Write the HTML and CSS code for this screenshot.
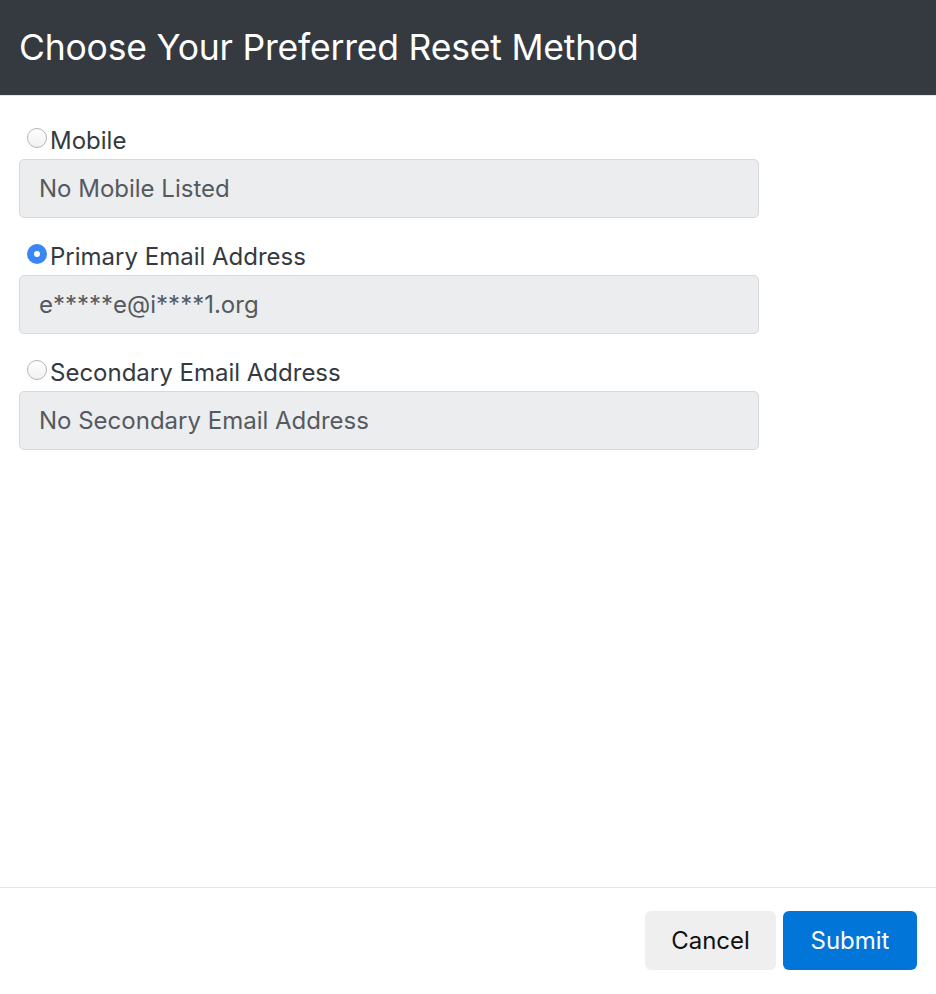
FILE: index.html
```html
<!DOCTYPE html>
<html>
<head>
<meta charset="utf-8">
<link rel="stylesheet" href="styles.css">
</head>
<body>
<div class="modal">
  <div class="modal-header">
    <h1 class="title">Choose Your Preferred Reset Method</h1>
  </div>
  <div class="modal-body">
    <div class="option">
      <label class="option-label"><span class="radio"></span>Mobile</label>
      <div class="field">No Mobile Listed</div>
    </div>
    <div class="option">
      <label class="option-label"><span class="radio checked"></span>Primary Email Address</label>
      <div class="field">e*****e@i****1.org</div>
    </div>
    <div class="option">
      <label class="option-label"><span class="radio"></span>Secondary Email Address</label>
      <div class="field">No Secondary Email Address</div>
    </div>
  </div>
  <div class="modal-footer">
    <button class="btn btn-cancel">Cancel</button>
    <button class="btn btn-submit">Submit</button>
  </div>
</div>
</body>
</html>
```
FILE: styles.css
```css
html, body {
  margin: 0;
  padding: 0;
  background: #ffffff;
}
body {
  font-family: Inter, "Liberation Sans", Arial, sans-serif;
  color: #343a40;
}
.modal {
  width: 936px;
  height: 994px;
  display: flex;
  flex-direction: column;
}
.modal-header {
  background: #343a40;
  height: 96px;
  box-sizing: border-box;
  padding: 0 19px;
  display: flex;
  align-items: center;
  border-bottom: 1px solid #e6e8ea;
}
.title {
  margin: 0;
  color: #ffffff;
  font-weight: 400;
  font-size: 35.5px;
  letter-spacing: -0.2px;
  line-height: 1;
}
.modal-body {
  flex: 1;
  padding: 34px 19px 0;
  display: flex;
  flex-direction: column;
  gap: 28px;
}
.option {
  display: flex;
  flex-direction: column;
}
.option-label {
  display: flex;
  align-items: center;
  font-size: 24px;
  line-height: 28px;
  height: 29px;
  padding-left: 8px;
  color: #343a40;
  margin-top: -4px;
  margin-bottom: 4px;
}
.radio {
  width: 20px;
  height: 20px;
  border-radius: 50%;
  border: 1px solid #b4b4b4;
  background: linear-gradient(#ffffff, #f1f1f1);
  box-sizing: border-box;
  margin-right: 3px;
  margin-top: -6px;
  flex: none;
}
.radio.checked {
  border: none;
  background: #3b86f6;
  position: relative;
}
.radio.checked::after {
  content: "";
  position: absolute;
  left: 7px;
  top: 7px;
  width: 6px;
  height: 6px;
  border-radius: 50%;
  background: #ffffff;
}
.field {
  width: 740px;
  height: 59px;
  box-sizing: border-box;
  border: 1px solid #d6d8db;
  border-radius: 5px;
  background: #ecedef;
  padding: 0 19px;
  display: flex;
  align-items: center;
  font-size: 24px;
  color: #555a5f;
}
.modal-footer {
  height: 107px;
  box-sizing: border-box;
  border-top: 1px solid #e3e5e8;
  display: flex;
  justify-content: flex-end;
  align-items: flex-start;
  padding: 23px 19px 0;
  gap: 7px;
}
.btn {
  height: 59px;
  border: none;
  border-radius: 6px;
  font-family: Inter, "Liberation Sans", Arial, sans-serif;
  font-size: 24px;
  padding: 0;
}
.btn-cancel {
  width: 131px;
  background: #efefef;
  color: #111111;
}
.btn-submit {
  width: 134px;
  background: #0275d8;
  color: #ffffff;
}
```
